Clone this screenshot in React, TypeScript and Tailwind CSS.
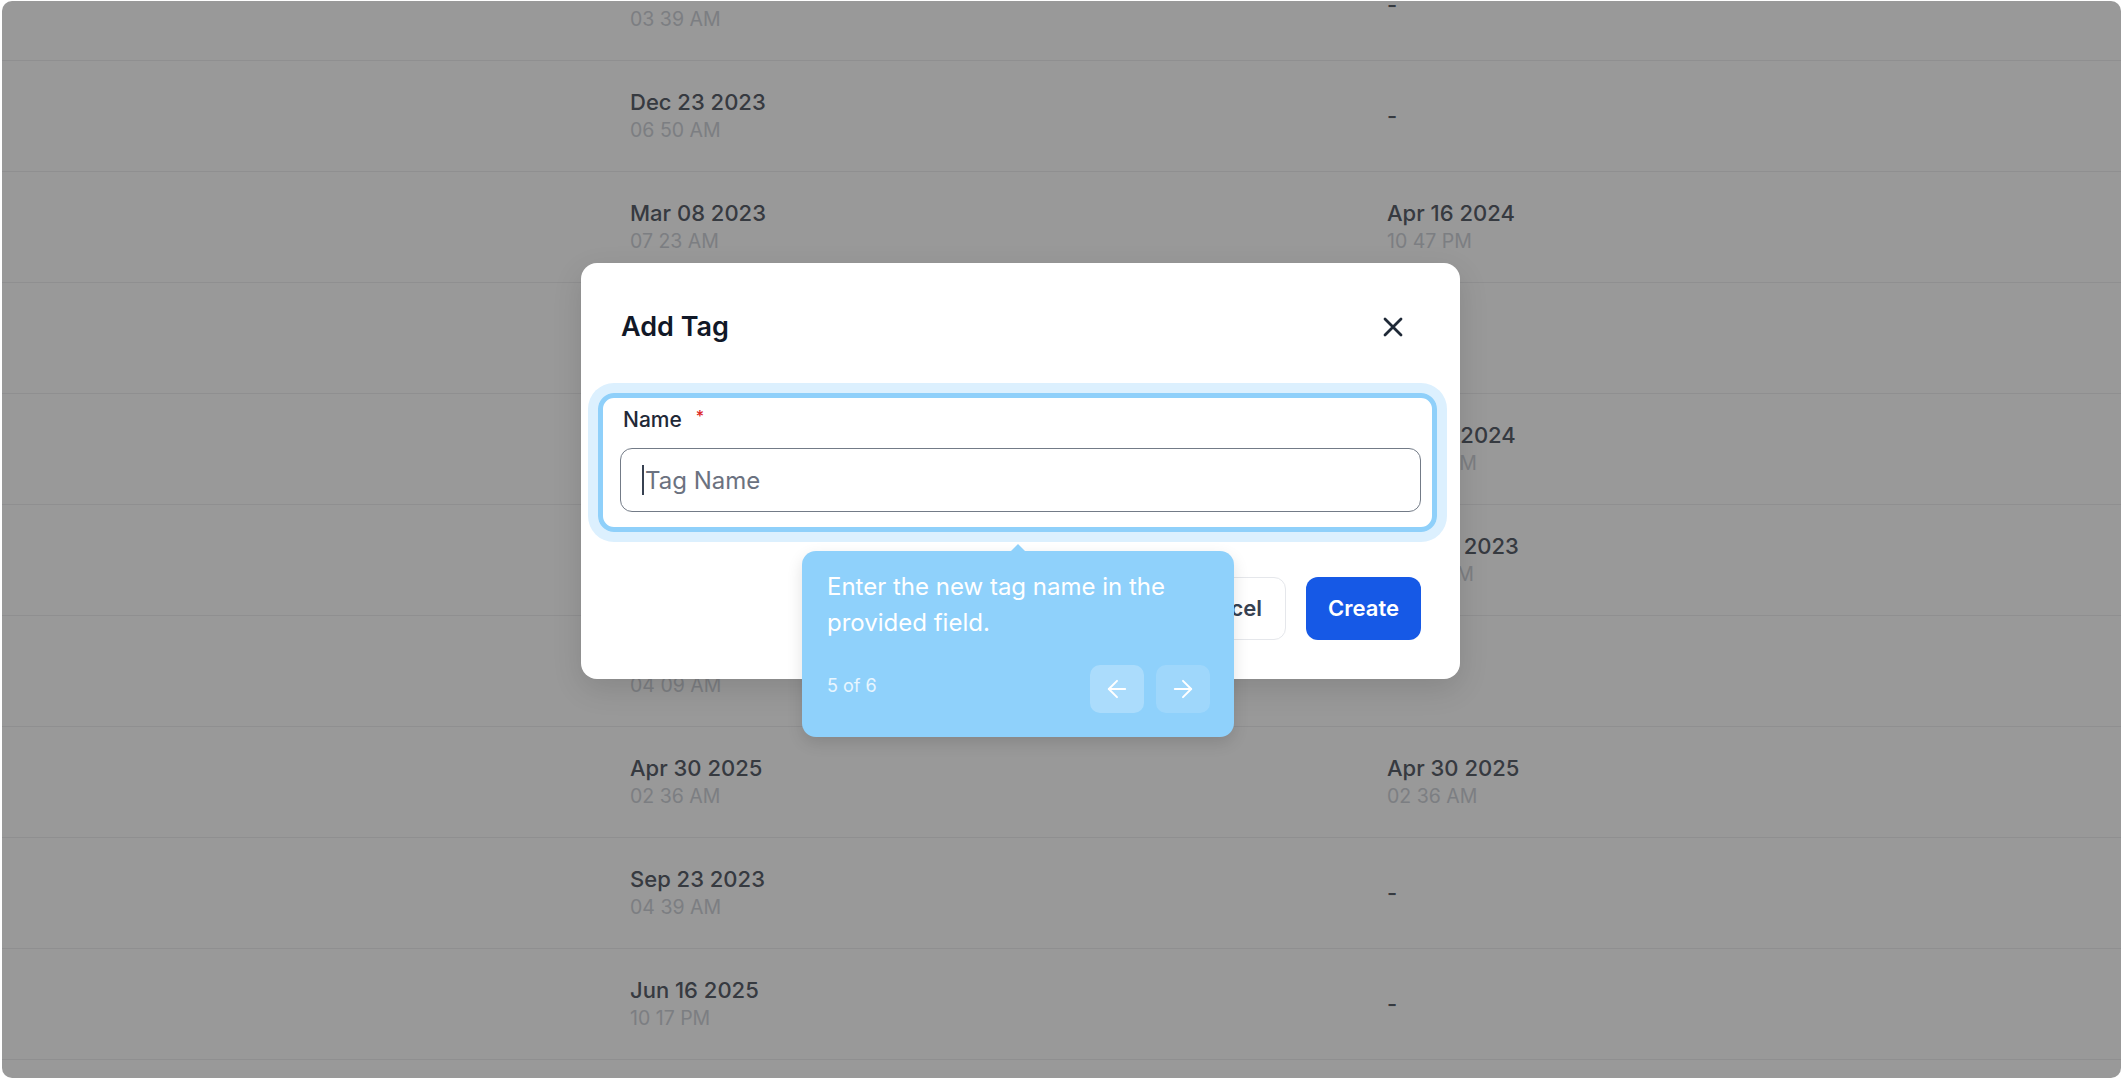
import { ArrowLeft, ArrowRight } from "lucide-react";

type Row = {
  date?: string;
  time?: string;
  updated?: { date: string; time: string };
};

const rows: Row[] = [
  { date: "Nov 14 2023", time: "03 39 AM" },
  { date: "Dec 23 2023", time: "06 50 AM" },
  { date: "Mar 08 2023", time: "07 23 AM", updated: { date: "Apr 16 2024", time: "10 47 PM" } },
  { date: "Jul 19 2024", time: "01 12 PM" },
  { date: "Sep 03 2023", time: "05 22 PM", updated: { date: "Feb 13 2024", time: "09 30 PM" } },
  { date: "Jan 11 2024", time: "11 05 AM", updated: { date: "Oct 03 2023", time: "08 14 AM" } },
  { date: "May 27 2024", time: "04 09 AM" },
  { date: "Apr 30 2025", time: "02 36 AM", updated: { date: "Apr 30 2025", time: "02 36 AM" } },
  { date: "Sep 23 2023", time: "04 39 AM" },
  { date: "Jun 16 2025", time: "10 17 PM" },
  {},
];

function DateCell({ date, time }: { date: string; time: string }) {
  return (
    <div className="flex flex-col">
      <span className="text-[22px] leading-[28px] font-medium text-[#5b616c]">{date}</span>
      <span className="text-[19.5px] leading-[28px] text-[#cfd3d9]">{time}</span>
    </div>
  );
}

function TagTable() {
  return (
    <div className="-mt-[51px] bg-white">
      {rows.map((row, i) => (
        <div
          key={i}
          className="grid h-[111px] grid-cols-[628px_757px_1fr] items-center border-b border-[#eeeff1]"
        >
          <div />
          <div>{row.date && row.time ? <DateCell date={row.date} time={row.time} /> : null}</div>
          <div>
            {row.updated ? (
              <DateCell date={row.updated.date} time={row.updated.time} />
            ) : row.date ? (
              <span className="text-[22px] font-medium text-[#5b616c]">-</span>
            ) : null}
          </div>
        </div>
      ))}
    </div>
  );
}

function AddTagModal() {
  return (
    <div className="absolute left-[579px] top-[262px] w-[879px] rounded-[16px] bg-white px-[39px] pb-[39px] pt-[40px] shadow-[0_10px_30px_rgba(0,0,0,0.12)]">
      <div className="flex h-[48px] items-center justify-between">
        <h2 className="pl-[1px] text-[27px] font-semibold text-[#111827]">Add Tag</h2>
        <button type="button" aria-label="Close" className="flex h-[48px] w-[56px] items-center justify-center">
          <svg width="20" height="20" viewBox="0 0 20 20" fill="none" stroke="#1f2937" strokeWidth="2.8" strokeLinecap="round">
            <path d="M2 2 18 18M18 2 2 18" />
          </svg>
        </button>
      </div>

      {/* highlighted field (tour step) */}
      <div className="-ml-[22px] -mr-[16px] mt-[42px] rounded-[16px] border-[5px] border-[#8fd0fa] pb-[15px] pl-[17px] pr-[11px] pt-[10px] shadow-[0_0_0_10px_#dcf0fe]">
        <label className="flex h-[24px] items-center pl-[3px] text-[21px] font-medium text-[#1f2937]">
          Name
          <span className="relative -top-[4px] ml-[14px] text-[16px] text-[#dc2626]">*</span>
        </label>
        <div className="relative mt-[16px]">
          <input
            placeholder="Tag Name"
            className="h-[64px] w-full rounded-[12px] border-[1.5px] border-[#737b87] bg-white pl-[24px] text-[24px] text-[#111827] outline-none placeholder:text-[#6b7280]"
          />
          <span className="absolute left-[22px] top-[17px] h-[30px] w-[2px] bg-[#374151]" />
        </div>
      </div>

      <div className="mt-[45px] flex justify-end gap-[20px]">
        <button
          type="button"
          className="h-[63px] rounded-[12px] border border-[#e5e7eb] bg-white px-[23px] text-[22px] font-semibold text-[#374151]"
        >
          Cancel
        </button>
        <button
          type="button"
          className="h-[63px] rounded-[12px] bg-[#1659e6] px-[22px] text-[22px] font-semibold text-white"
        >
          Create
        </button>
      </div>
    </div>
  );
}

function TourPopover() {
  return (
    <div className="absolute left-[800px] top-[550px] w-[432px] rounded-[14px] bg-[#8fd1fb] pb-[24px] pl-[25px] pr-[24px] pt-[18px] shadow-[0_6px_16px_rgba(0,0,0,0.12)]">
      <span className="absolute -top-[7px] left-1/2 h-0 w-0 -translate-x-1/2 border-x-[8px] border-b-[8px] border-x-transparent border-b-[#8fd1fb]" />
      <p className="text-[24px] leading-[36px] text-white">Enter the new tag name in the provided field.</p>
      <div className="mt-[24px] flex items-center justify-between">
        <span className="relative -top-[4px] text-[18px] text-white/80">5 of 6</span>
        <div className="flex gap-[12px]">
          <button
            type="button"
            aria-label="Previous"
            className="flex h-[48px] w-[54px] items-center justify-center rounded-[10px] bg-white/25"
          >
            <ArrowLeft size={28} strokeWidth={1.7} className="text-white" />
          </button>
          <button
            type="button"
            aria-label="Next"
            className="flex h-[48px] w-[54px] items-center justify-center rounded-[10px] bg-white/15"
          >
            <ArrowRight size={28} strokeWidth={1.7} className="text-white" />
          </button>
        </div>
      </div>
    </div>
  );
}

export default function App() {
  return (
    <div className="h-[1080px] w-[2124px] bg-white pb-[2px] pl-[2px] pr-[3px] pt-[1px] font-['Inter',sans-serif]">
      <div className="relative h-full overflow-hidden rounded-[10px]">
        <TagTable />
        <div className="absolute inset-0 bg-black/40" />
        <AddTagModal />
        <TourPopover />
      </div>
    </div>
  );
}
